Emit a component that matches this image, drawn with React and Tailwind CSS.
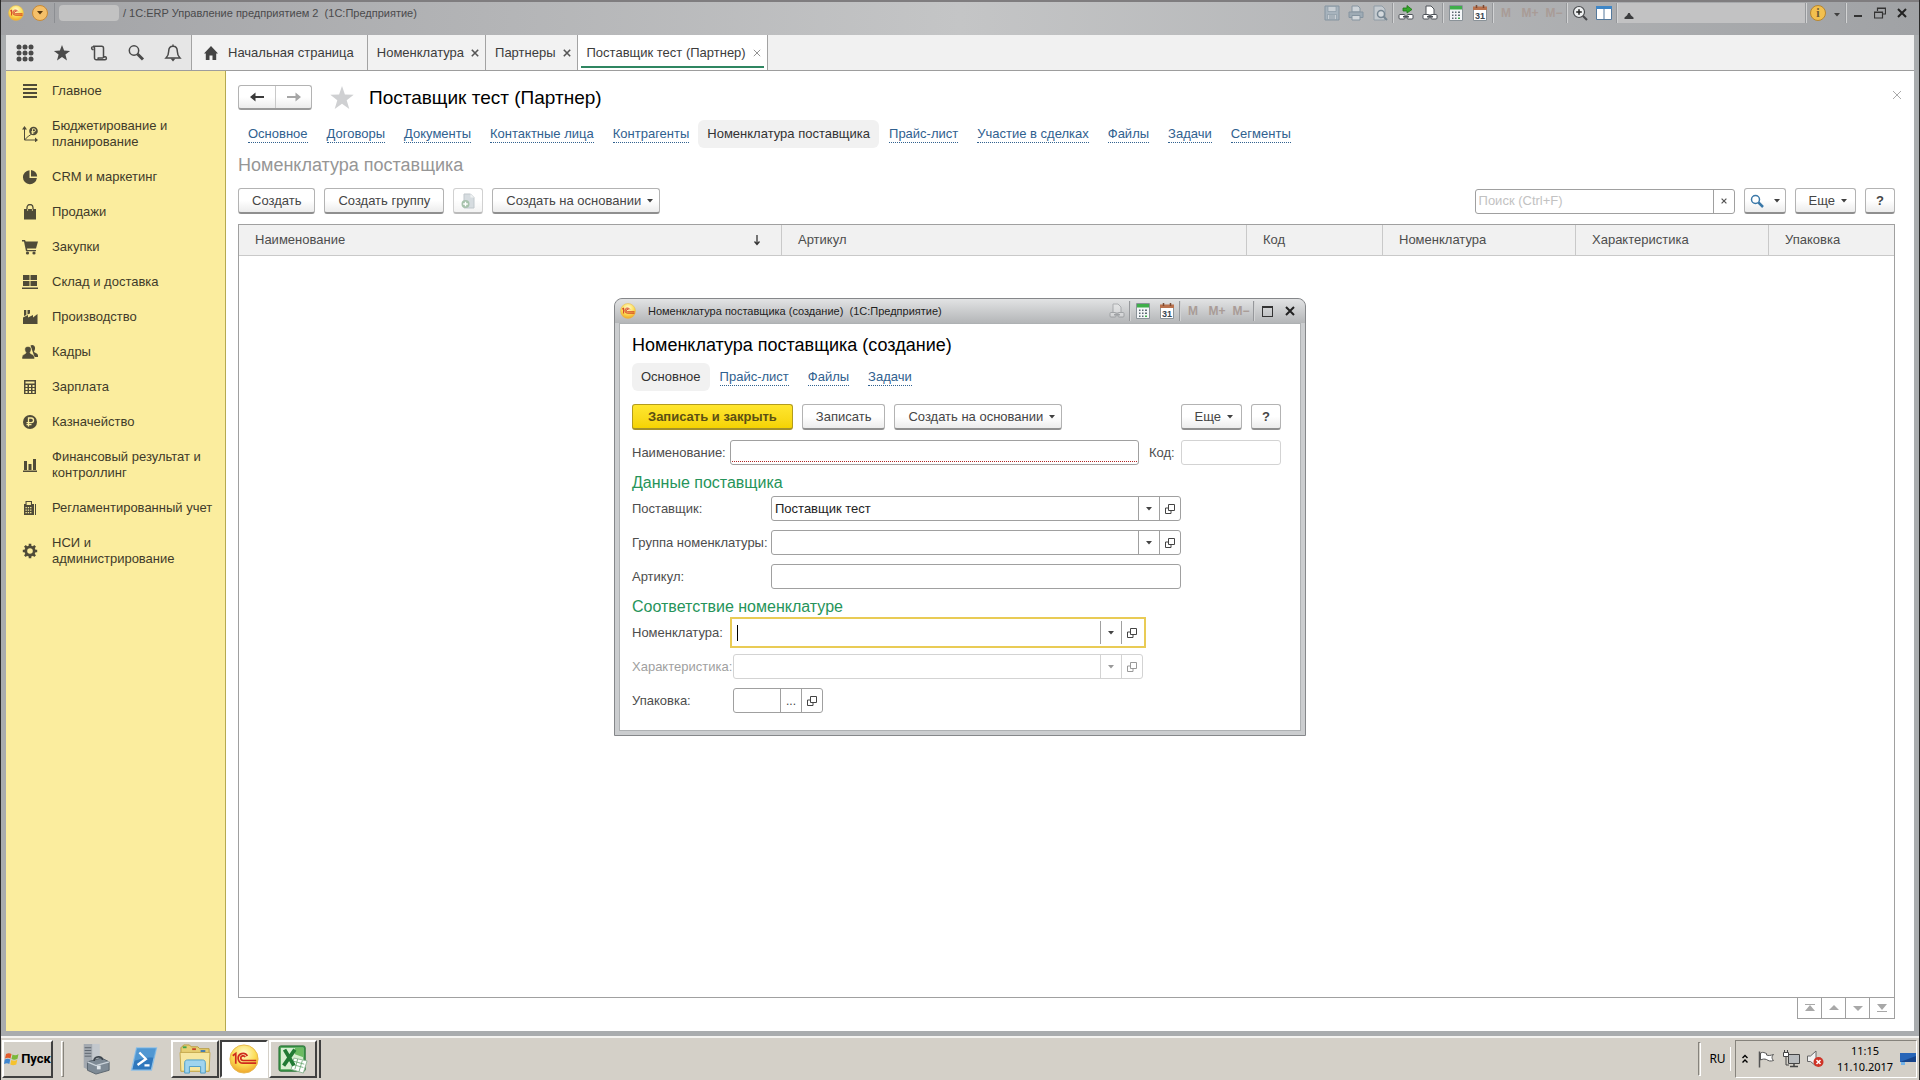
import { useState } from 'react';

const SECTIONS = [
  { icon: 'menu', label: 'Главное' },
  { icon: 'budget', label: 'Бюджетирование и планирование' },
  { icon: 'pie', label: 'CRM и маркетинг' },
  { icon: 'bag', label: 'Продажи' },
  { icon: 'cart', label: 'Закупки' },
  { icon: 'stock', label: 'Склад и доставка' },
  { icon: 'factory', label: 'Производство' },
  { icon: 'people', label: 'Кадры' },
  { icon: 'calc', label: 'Зарплата' },
  { icon: 'ruble', label: 'Казначейство' },
  { icon: 'bars', label: 'Финансовый результат и контроллинг' },
  { icon: 'ledger', label: 'Регламентированный учет' },
  { icon: 'gear', label: 'НСИ и администрирование' },
];

const PARTNER_LINKS = [
  'Основное',
  'Договоры',
  'Документы',
  'Контактные лица',
  'Контрагенты',
  'Номенклатура поставщика',
  'Прайс-лист',
  'Участие в сделках',
  'Файлы',
  'Задачи',
  'Сегменты',
];

const DIALOG_LINKS = ['Основное', 'Прайс-лист', 'Файлы', 'Задачи'];

// Section icons, all drawn on a 16x16 grid
const SECTION_SHAPES = {
  menu: <path d="M1 1h14v2H1zM1 5h14v2H1zM1 9h14v2H1zM1 13h14v2H1z" />,
  budget: (
    <>
      <path d="M2.5 3v11H14M2.5 14l4-4 2-1 2-2" fill="none" stroke="currentColor" />
      <path d="M2.5 0L5 3.5H0zM16 14l-3-2.5v5z" />
      <circle cx="11.5" cy="5" r="4.3" />
      <path d="M10.5 8V2.8h1.6a1.4 1.4 0 0 1 0 2.8H9.3M9.3 6.9h3" fill="none" stroke="#fbed9e" strokeWidth="0.9" />
    </>
  ),
  pie: (
    <>
      <path d="M7.5 1.2A7 7 0 1 0 14.9 9H7.5z" />
      <path d="M9 .9V7.4h6.2A6.9 6.9 0 0 0 9 .9z" />
    </>
  ),
  bag: (
    <>
      <path d="M2 5h12v10.5H2z" />
      <path d="M5 8V3.5a3 3 0 0 1 6 0V8" fill="none" stroke="currentColor" strokeWidth="1.3" />
      <path d="M5.6 5v2M10.4 5v2" stroke="#fbed9e" strokeWidth="0.7" />
    </>
  ),
  cart: (
    <>
      <path d="M0 1h3l.7 1.5H16L14 9.5H5l.3 1.5H14v1.3H4L2 2.4H0z" />
      <circle cx="5.5" cy="14" r="1.6" />
      <circle cx="12" cy="14" r="1.6" />
    </>
  ),
  stock: <path d="M1 1h6.5v5H1zM8.5 1H15v5H8.5zM1 7h6.5v5H1zM8.5 7H15v5H8.5zM0 13.500h16V15H0z" />,
  factory: <path d="M1 15V8.5L6 6v2.500L11 6v2.500L15.500 5v10zM2 1h2.300v5L2 7zM5.500 1H8v3.500L5.500 5.500z" />,
  people: (
    <>
      <path d="M8.5 1.500a3 3 0 0 1 4.500 2c.2 1.500-.2 3-1 4 .3 1.500 4 1.500 4 4v1.500h-3.500z" />
      <path d="M6 2.500c4 0 3.600 4 2 6 .3 2 4.500 1.700 4.500 5V15H0v-1.500c0-3.300 3.700-3 4-5-1.600-2-2-6 2-6z" stroke="#fbed9e" strokeWidth="0.5" />
    </>
  ),
  calc: (
    <>
      <path d="M2 1h12v14H2z" />
      <path d="M3.500 2.500h9v2h-9zM3.500 6h2v2h-2zM7 6h2v2H7zM10.500 6h2v2h-2zM3.500 9h2v2h-2zM7 9h2v2H7zM10.500 9h2v2h-2zM3.500 12h2v2h-2zM7 12h2v2H7zM10.500 12h2v2h-2z" fill="#fbed9e" />
    </>
  ),
  ruble: (
    <>
      <circle cx="8" cy="8" r="7" />
      <path d="M6.500 12.500v-8.500h2.700a2.300 2.300 0 0 1 0 4.700H4.500M4.500 10.600h5" fill="none" stroke="#fbed9e" strokeWidth="1.3" />
    </>
  ),
  bars: <path d="M2 4h3v9H2zM6.500 7h3v6h-3zM11 2h3v11h-3zM1 13.500h14V15H1z" />,
  ledger: (
    <>
      <path d="M2 4h1.500V1H10v3h2v11H2zM13 4h1v11h-1z" />
      <path d="M4.600 2.100h4.300v3H4.600zM3.500 7h1.300v1.300H3.500zM5.800 7h1.300v1.300H5.800zM8.100 7h1.300v1.300H8.100zM3.500 9.500h1.300v1.300H3.500zM5.800 9.500h1.300v1.300H5.800zM8.100 9.500h1.300v1.300H8.100zM3.500 12h1.300v1.300H3.500zM5.800 12h1.300v1.300H5.800zM8.100 12h1.300v1.300H8.100z" fill="#fbed9e" />
    </>
  ),
  gear: (
    <>
      <circle cx="8" cy="8" r="4.2" fill="none" stroke="currentColor" strokeWidth="2.8" />
      <path d="M8 .8v2.500M8 12.700v2.500M.8 8h2.500M12.700 8h2.500M2.900 2.900l1.700 1.700M11.400 11.400l1.700 1.700M13.100 2.900l-1.700 1.700M4.600 11.400l-1.700 1.700" stroke="currentColor" strokeWidth="2.6" />
    </>
  ),
};

function SectionIcon({ name }) {
  return (
    <svg viewBox="0 0 16 16" className="size-4 shrink-0 text-[#4f4b38]" fill="currentColor" aria-hidden="true">
      {SECTION_SHAPES[name]}
    </svg>
  );
}

function Logo({ className }) {
  return (
    <svg viewBox="0 0 32 32" className={className} aria-hidden="true">
      <defs>
        <radialGradient id="logoFill" cx="50%" cy="30%" r="70%">
          <stop offset="0" stopColor="#fffbd0" />
          <stop offset="0.6" stopColor="#fbdc52" />
          <stop offset="1" stopColor="#f0a52c" />
        </radialGradient>
      </defs>
      <circle cx="16" cy="16" r="15" fill="url(#logoFill)" stroke="#e8b64a" />
      <path d="M4 12.500l3.200-2.500V21M19.600 12.800A5.200 5.200 0 1 0 15 20.400H29M17.300 14A2.500 2.500 0 1 0 15 17.600H29" fill="none" stroke="#cf2a1c" strokeWidth="1.8" />
    </svg>
  );
}

function Caret({ className = 'text-[#404040]' }) {
  return (
    <svg viewBox="0 0 6 4" className={`h-1 w-1.5 shrink-0 ${className}`} fill="currentColor" aria-hidden="true">
      <path d="M0 0h6L3 3.500z" />
    </svg>
  );
}

function Cross({ className }) {
  return (
    <svg viewBox="0 0 10 10" className={className} fill="none" stroke="currentColor" aria-hidden="true">
      <path d="M1 1l8 8M9 1L1 9" />
    </svg>
  );
}

function CalculatorIcon() {
  return (
    <svg viewBox="0 0 14 16" className="h-4 w-3.5" aria-hidden="true">
      <path d="M.5.5h13v15H.5z" fill="#f4f6f8" stroke="#8a9298" />
      <path d="M1 1h12v3.500H1z" fill="#3fae4a" />
      <path d="M3 6.500h1.500V8H3zM6 6.500h1.500V8H6zM9 6.500h2V8H9zM3 9.500h1.500V11H3zM6 9.500h1.500V11H6zM9 9.500h2V11H9zM3 12.500h1.500V14H3zM6 12.500h1.500V14H6z" fill="#5d6b74" />
      <path d="M9 12.500h2V14H9z" fill="#3fae4a" />
    </svg>
  );
}

function CalendarIcon() {
  return (
    <svg viewBox="0 0 14 16" className="h-4 w-3.5" aria-hidden="true">
      <path d="M.5 2.500h13v13H.5z" fill="#fff" stroke="#8a9298" />
      <path d="M0 1.500h14V5H0z" fill="#b9714d" />
      <path d="M3.500 0v3M10.500 0v3" stroke="#7a4a33" strokeWidth="1.5" />
      <text x="7" y="14" textAnchor="middle" fontSize="9" fontWeight="700" fill="#3a4650" fontFamily="Liberation Sans, sans-serif">31</text>
    </svg>
  );
}

function PrinterIcon() {
  return (
    <svg viewBox="0 0 16 16" className="size-4" aria-hidden="true">
      <path d="M4 1h6l2 2v4H4z" fill="#cdd3d8" stroke="#8594a0" />
      <path d="M1 7h14v5.500H1z" fill="#9eabb5" stroke="#8594a0" />
      <path d="M4 10.500h8V15H4z" fill="#d3d8dc" stroke="#8594a0" />
    </svg>
  );
}

// Sheet of paper over two chain links
function LinkedSheetIcon({ className = 'size-4' }) {
  return (
    <svg viewBox="0 0 16 16" className={className} aria-hidden="true">
      <path d="M4 1h5l3 3v6H4z" fill="#fff" stroke="#4c5157" />
      <rect x="1" y="9.500" width="6" height="4.500" rx="1" fill="#fff" stroke="#4c5157" />
      <rect x="9" y="9.500" width="6" height="4.500" rx="1" fill="#fff" stroke="#4c5157" />
      <path d="M5 11.700h6" stroke="#4c5157" strokeWidth="1.5" />
    </svg>
  );
}

function ToolButton({ label, children, className = 'w-6' }) {
  return (
    <button type="button" aria-label={label} className={`flex h-5 items-center justify-center ${className}`}>
      {children}
    </button>
  );
}

function ToolDivider() {
  return <span className="h-5 w-0.5 shrink-0 border-r border-l border-r-[#d2d3d4] border-l-[#96989b]" />;
}

function MemoryButtons() {
  return ['M', 'M+', 'M−'].map((text) => (
    <button key={text} type="button" className="h-5 w-6 text-xs font-bold text-[#a99c97]">
      {text}
    </button>
  ));
}

function TitleBar() {
  return (
    <header className="flex h-[35px] items-start border-t-2 border-[#7f7d7f] bg-linear-to-r from-[#a2a3a6] via-[#c4c5c6] to-[#a0a2a5] pr-1.5 pl-[7px]">
      <div className="flex h-[22px] grow items-center">
        <Logo className="size-4" />
        <button type="button" aria-label="Главное меню" className="mr-1.5 ml-2 flex size-4 items-center justify-center rounded-full border border-[#c98a35] bg-[#f5c069]">
          <Caret className="text-[#5b3a10]" />
        </button>
        <span className="h-5 w-px bg-[#8c8e92]" />
        <span className="mr-1 ml-1 h-4 w-[60px] rounded-sm bg-[#c2c2c2]" />
        <h1 className="text-[11px] whitespace-pre text-[#4a4a4c]">/ 1С:ERP Управление предприятием 2  (1С:Предприятие)</h1>
      </div>
      <div className="flex h-[22px] items-center">
        <ToolButton label="Сохранить">
          <svg viewBox="0 0 16 16" className="size-4" aria-hidden="true">
            <path d="M1 1h14v14H1z" fill="#a7b3bd" stroke="#8594a0" />
            <path d="M4 1.500h8v5H4zM3.500 9.500h9v5h-9z" fill="#c9cfd4" stroke="#8594a0" strokeWidth="0.6" />
            <path d="M5 11h6M5 13h6" stroke="#8594a0" />
          </svg>
        </ToolButton>
        <ToolButton label="Печать"><PrinterIcon /></ToolButton>
        <ToolButton label="Предварительный просмотр">
          <svg viewBox="0 0 16 16" className="size-4" aria-hidden="true">
            <path d="M2 1h8l3 3v11H2z" fill="#c5cbd0" stroke="#8f9ca6" />
            <circle cx="9" cy="9" r="3.5" fill="#d5dade" stroke="#768692" strokeWidth="1.5" />
            <path d="M11.500 11.500L15 15" stroke="#768692" strokeWidth="2" />
          </svg>
        </ToolButton>
        <ToolDivider />
        <ToolButton label="Получить ссылку">
          <svg viewBox="0 0 16 16" className="size-4" aria-hidden="true">
            <path d="M5 3h4V.5L14 4.500 9 8V6H5z" fill="#35a82b" stroke="#1d7617" strokeWidth="0.8" />
            <rect x="1" y="9.500" width="6" height="4.500" rx="1" fill="#fff" stroke="#4c5157" />
            <rect x="9" y="9.500" width="6" height="4.500" rx="1" fill="#fff" stroke="#4c5157" />
            <path d="M5 11.700h6" stroke="#4c5157" strokeWidth="1.5" />
          </svg>
        </ToolButton>
        <ToolButton label="Перейти по ссылке"><LinkedSheetIcon /></ToolButton>
        <ToolDivider />
        <ToolButton label="Калькулятор"><CalculatorIcon /></ToolButton>
        <ToolButton label="Календарь"><CalendarIcon /></ToolButton>
        <ToolDivider />
        <MemoryButtons />
        <ToolDivider />
        <ToolButton label="Масштаб">
          <svg viewBox="0 0 16 16" className="size-4" fill="none" aria-hidden="true">
            <circle cx="7" cy="7" r="5.5" fill="#eef0f1" stroke="#47494c" strokeWidth="1.2" />
            <path d="M7 4.200v5.600M4.200 7h5.600" stroke="#222" strokeWidth="1.5" />
            <path d="M11 11l4 4" stroke="#47494c" strokeWidth="2.2" />
          </svg>
        </ToolButton>
        <ToolButton label="Панели">
          <svg viewBox="0 0 16 16" className="size-4" aria-hidden="true">
            <path d="M.5 1.500h15v13H.5z" fill="#fff" stroke="#54799c" />
            <path d="M0 1h16v3H0z" fill="#3f86c6" />
            <path d="M8 4v10.500" stroke="#54799c" />
          </svg>
        </ToolButton>
        <ToolDivider />
        <span className="flex h-5 w-[187px] items-end bg-[#c2c2c3]">
          <svg viewBox="0 0 12 8" className="mb-1 ml-1.5 h-1.5 w-2.5" fill="#3c3d3f" aria-hidden="true">
            <path d="M3.500 3L5 0h2l1.500 3L12 6v2H0V6z" />
          </svg>
        </span>
        <ToolDivider />
        <ToolButton label="Информация" className="w-[22px]">
          <span className="flex size-4 items-center justify-center rounded-full border border-[#b8862e] bg-[#f2c04f] font-['Liberation_Serif',serif] text-xs font-bold text-[#6b5a36]">i</span>
        </ToolButton>
        <ToolButton label="Ещё" className="w-4 pt-1"><Caret /></ToolButton>
        <ToolDivider />
        <ToolButton label="Свернуть" className="w-[22px]"><span className="mt-1.5 h-0.5 w-2 bg-[#333]" /></ToolButton>
        <ToolButton label="Восстановить" className="w-[22px]">
          <svg viewBox="0 0 12 12" className="size-3" fill="none" stroke="#333" aria-hidden="true">
            <path d="M3.500 4V1h8v6H9M3.500 1.500h8" strokeWidth="1.2" />
            <path d="M.5 5h8v6h-8zM.5 5.500h8" strokeWidth="1.2" />
          </svg>
        </ToolButton>
        <ToolButton label="Закрыть" className="w-[22px]"><Cross className="size-2.5 stroke-2 text-[#222]" /></ToolButton>
      </div>
    </header>
  );
}

function Tab({ label, active }) {
  return (
    <div className={`flex h-full items-center border-r border-[#a3a3a3] pr-[5px] pl-[9px] ${active ? 'relative -mb-px bg-white' : 'bg-[#f2f2f2]'}`}>
      <button type="button" className="text-[13px] whitespace-nowrap text-[#3c3c3c]">{label}</button>
      <button type="button" aria-label={`Закрыть: ${label}`} className="ml-1.5 flex size-2.5 items-center justify-center">
        <Cross className={active ? 'size-2 text-[#777]' : 'size-2 stroke-2 text-[#555]'} />
      </button>
      {active && <span className="absolute inset-x-[3px] bottom-0.5 h-0.5 bg-[#2f8661]" />}
    </div>
  );
}

function TopPanel() {
  return (
    <nav className="flex h-9 border-b border-[#9d9d9d] bg-[#f1f1f1]">
      <div className="flex w-[185px] shrink-0 items-center bg-[#e6e6e6] text-[#4a4a4a]">
        <ToolButton label="Меню функций" className="w-[37px]">
          <svg viewBox="0 0 18 18" className="size-[18px]" fill="currentColor" aria-hidden="true">
            {[3, 9, 15].map((y) => [3, 9, 15].map((x) => <circle key={`${x}-${y}`} cx={x} cy={y} r="2.5" />))}
          </svg>
        </ToolButton>
        <ToolButton label="Избранное" className="w-[37px]">
          <svg viewBox="0 0 18 18" className="size-[18px]" fill="currentColor" aria-hidden="true">
            <path d="M9 1l2.100 5.600 6 .3-4.700 3.700 1.600 5.800L9 13.100l-5 3.300 1.600-5.800L.9 6.900l6-.3z" />
          </svg>
        </ToolButton>
        <ToolButton label="История" className="w-[37px]">
          <svg viewBox="0 0 18 18" className="size-[18px]" fill="none" stroke="currentColor" strokeWidth="1.5" aria-hidden="true">
            <path d="M3.500 5.500h-1A1.500 1.500 0 1 1 4.500 3.500V14a1.800 1.800 0 0 0 1.800 1.800H15a1.500 1.500 0 1 0-1.500-2V4a1.800 1.800 0 0 0-1.800-1.800H3M6.500 15.800A1.800 1.800 0 0 0 8.300 14h5" />
          </svg>
        </ToolButton>
        <ToolButton label="Поиск" className="w-[37px]">
          <svg viewBox="0 0 18 18" className="size-[18px]" fill="none" stroke="currentColor" aria-hidden="true">
            <circle cx="7" cy="6.500" r="4.700" strokeWidth="1.5" />
            <path d="M10.500 10L16 15.500" strokeWidth="3" />
          </svg>
        </ToolButton>
        <ToolButton label="Оповещения" className="w-[37px]">
          <svg viewBox="0 0 18 18" className="size-[18px]" fill="none" stroke="currentColor" strokeWidth="1.5" aria-hidden="true">
            <path d="M9 2.200c-3 0-4.300 2.200-4.300 5 0 3.600-1 5-2.700 6.800h14c-1.700-1.800-2.700-3.200-2.700-6.800 0-2.800-1.300-5-4.300-5zM9 .5v2" />
            <path d="M6.500 14.500h5L9 17.500z" fill="currentColor" strokeWidth="0" />
          </svg>
        </ToolButton>
      </div>
      <button type="button" className="flex items-center gap-2.5 border-x border-[#a3a3a3] bg-[#f2f2f2] pr-[13px] pl-3 text-[13px] whitespace-nowrap text-[#3c3c3c]">
        <svg viewBox="0 0 14 14" className="size-3.5" fill="#444" aria-hidden="true">
          <path d="M7 0l7 7.500h-1.800V14H8.500V9.500h-3V14H1.800V7.500H0z" />
        </svg>
        Начальная страница
      </button>
      <Tab label="Номенклатура" />
      <Tab label="Партнеры" />
      <Tab label="Поставщик тест (Партнер)" active />
    </nav>
  );
}

function Sidebar() {
  return (
    <aside className="w-[220px] shrink-0 border-r border-[#b5a951] bg-[#fbed9e] pt-[3px]">
      <ul>
        {SECTIONS.map(({ icon, label }) => (
          <li key={label}>
            <button type="button" className="flex w-full items-center gap-3.5 pt-[9px] pr-2 pb-2.5 pl-4 text-left text-[13px] leading-4 text-[#3f3b2a]">
              <SectionIcon name={icon} />
              {label}
            </button>
          </li>
        ))}
      </ul>
    </aside>
  );
}

function LinkBar({ links, active }) {
  return (
    <nav className="flex h-7 items-center text-[13px]">
      {links.map((link) =>
        link === active ? (
          <span key={link} className="rounded-md bg-[#f1f1f1] px-[9px] py-1 leading-5 whitespace-nowrap text-[#333]">{link}</span>
        ) : (
          <a key={link} href="#" className="mr-[9px] ml-2.5 border-b border-dotted border-[#30618f] leading-4 whitespace-nowrap text-[#30618f]">{link}</a>
        ),
      )}
    </nav>
  );
}

function Button({ children, caret, primary, label, className = 'px-[13px]' }) {
  const tone = primary
    ? 'border-[#b39c1d] border-b-[#a3902c] bg-linear-to-b from-[#ffe62e] to-[#f5d300] font-bold text-[#5c5013]'
    : 'border-[#b3b3b3] border-b-[#8f8f8f] bg-linear-to-b from-white from-50% to-[#ececec] text-[#454545]';
  return (
    <button type="button" aria-label={label} className={`flex h-[26px] shrink-0 items-center justify-center gap-1.5 rounded-[3px] border border-b-2 pt-px text-[13px] whitespace-nowrap ${tone} ${className}`}>
      {children}
      {caret && <Caret />}
    </button>
  );
}

function OpenIcon() {
  return (
    <svg viewBox="0 0 10 10" className="size-2.5" fill="none" stroke="currentColor" aria-hidden="true">
      <path d="M3.500.5h6v6h-6zM3.500 4H.5v5.500H6V6.500" />
    </svg>
  );
}

// Text box with the small buttons that 1C puts at its right edge
function Field({ id, width, value, picker, disabled, focused }) {
  const line = disabled ? 'border-[#d3d3d3]' : 'border-[#a0a0a0]';
  const color = disabled ? 'text-[#999]' : 'text-[#444]';
  const box = focused ? 'h-[31px] border-2 border-[#e9cb55] p-0.5' : `h-[25px] rounded-[3px] border ${line}`;
  return (
    <div className={`flex bg-white ${box} ${width}`}>
      {focused && <span className="mt-1 ml-[3px] h-4 w-px bg-black" />}
      <input id={id} defaultValue={value} disabled={disabled} className="min-w-0 grow px-[3px] text-[13px] text-[#222] outline-none" />
      {picker && (
        <>
          <button type="button" aria-label="Выбрать" disabled={disabled} className={`flex w-[21px] shrink-0 items-center justify-center border-l text-xs ${line} ${color}`}>
            {picker === 'list' ? <Caret className={color} /> : '...'}
          </button>
          <button type="button" aria-label="Открыть" disabled={disabled} className={`flex w-[21px] shrink-0 items-center justify-center border-l ${line} ${color}`}>
            <OpenIcon />
          </button>
        </>
      )}
    </div>
  );
}

function Row({ id, label, labelWidth, disabled, children }) {
  return (
    <div className="flex items-center text-[13px]">
      <label htmlFor={id} className={`shrink-0 whitespace-nowrap ${labelWidth} ${disabled ? 'text-[#a0a0a0]' : 'text-[#4d4d4d]'}`}>{label}</label>
      {children}
    </div>
  );
}

function SupplierItemDialog({ onClose }) {
  return (
    <section role="dialog" aria-label="Номенклатура поставщика (создание)" className="absolute top-[298px] left-1/2 w-[692px] -translate-x-1/2 rounded-t-lg border border-[#85878a] bg-[#cbcdcf] px-1 pb-1">
      <div className="-mx-1 flex h-6 items-center rounded-t-lg bg-linear-to-b from-[#e2e3e4] to-[#b4b6b8] pr-1 pl-[5px]">
        <Logo className="size-4" />
        <h2 className="grow pl-3 text-[11px] whitespace-pre text-[#222]">Номенклатура поставщика (создание)  (1С:Предприятие)</h2>
        <ToolButton label="Перейти по ссылке"><LinkedSheetIcon className="size-4 opacity-30" /></ToolButton>
        <ToolDivider />
        <ToolButton label="Калькулятор"><CalculatorIcon /></ToolButton>
        <ToolButton label="Календарь"><CalendarIcon /></ToolButton>
        <ToolDivider />
        <MemoryButtons />
        <ToolDivider />
        <ToolButton label="Развернуть"><span className="size-[11px] border border-t-2 border-[#333]" /></ToolButton>
        <button type="button" aria-label="Закрыть" onClick={onClose} className="flex h-5 w-[22px] items-center justify-center">
          <Cross className="size-2.5 stroke-2 text-[#222]" />
        </button>
      </div>
      <form className="border border-[#aeb1b3] bg-white pt-[9px] pr-[19px] pb-[17px] pl-3" onSubmit={(e) => e.preventDefault()}>
        <h3 className="text-lg leading-6 text-black">Номенклатура поставщика (создание)</h3>
        <div className="mt-1.5">
          <LinkBar links={DIALOG_LINKS} active="Основное" />
        </div>
        <div className="mt-[13px] flex gap-[9px]">
          <Button primary className="px-[15px]">Записать и закрыть</Button>
          <Button>Записать</Button>
          <Button caret className="pr-1.5 pl-[13px]">Создать на основании</Button>
          <div className="grow" />
          <Button caret className="pr-2 pl-[13px]">Еще</Button>
          <Button label="Справка" className="w-[30px] font-bold">?</Button>
        </div>
        <div className="mt-2.5 flex items-center text-[13px] text-[#4d4d4d]">
          <label htmlFor="name" className="w-[98px] shrink-0">Наименование:</label>
          <div className="h-[25px] grow rounded-[3px] border border-[#a0a0a0] px-px pb-0.5">
            <input id="name" className="block h-full w-full border-b border-dotted border-[#b02525] px-0.5 outline-none" />
          </div>
          <label htmlFor="code" className="w-[42px] shrink-0 pl-2.5">Код:</label>
          <Field id="code" width="w-[100px]" disabled />
        </div>

        <h4 className="mt-2 mb-[3px] text-base leading-5 text-[#26945a]">Данные поставщика</h4>
        <div className="flex flex-col gap-[9px]">
          <Row id="supplier" label="Поставщик:" labelWidth="w-[139px]">
            <Field id="supplier" width="w-[410px]" value="Поставщик тест" picker="list" />
          </Row>
          <Row id="group" label="Группа номенклатуры:" labelWidth="w-[139px]">
            <Field id="group" width="w-[410px]" picker="list" />
          </Row>
          <Row id="article" label="Артикул:" labelWidth="w-[139px]">
            <Field id="article" width="w-[410px]" />
          </Row>
        </div>

        <h4 className="mt-2 text-base leading-5 text-[#26945a]">Соответствие номенклатуре</h4>
        <Row id="item" label="Номенклатура:" labelWidth="w-[98px]">
          <Field id="item" width="w-[416px]" picker="list" focused />
        </Row>
        <div className="mt-1.5 flex flex-col gap-[9px]">
          <Row id="feature" label="Характеристика:" labelWidth="w-[101px]" disabled>
            <Field id="feature" width="w-[410px]" picker="list" disabled />
          </Row>
          <Row id="pack" label="Упаковка:" labelWidth="w-[101px]">
            <Field id="pack" width="w-[90px]" picker="dots" />
          </Row>
        </div>
      </form>
    </section>
  );
}

const HEAD_CELL = 'border-r border-b border-[#c9c9c9] px-4 text-left font-normal last:border-r-0';

function SupplierItems() {
  return (
    <main className="flex min-w-0 grow flex-col bg-white pr-[19px] pb-3 pl-3">
      <div className="flex h-[49px] items-center pt-1">
        <div className="flex h-[25px] rounded-[3px] border border-b-2 border-[#b3b3b3] border-b-[#9a9a9a] bg-linear-to-b from-white from-50% to-[#ececec]">
          {['Назад', 'Вперед'].map((label, i) => (
            <button key={label} type="button" aria-label={label} className={i ? 'flex w-9 items-center justify-center border-l border-[#c9c9c9] text-[#a6a6a6]' : 'flex w-9 items-center justify-center text-[#3a3a3a]'}>
              <svg viewBox="0 0 14 10" className={i ? 'h-2.5 w-3.5 rotate-180' : 'h-2.5 w-3.5'} fill="currentColor" aria-hidden="true">
                <path d="M0 5l5.500-4.500V4H14v2H5.500v3.500z" />
              </svg>
            </button>
          ))}
        </div>
        <button type="button" aria-label="В избранное" className="ml-[18px]">
          <svg viewBox="0 0 24 24" className="size-6" fill="#cfd0d2" aria-hidden="true">
            <path d="M12 0l2.900 8.600 8.800.2-7 5.500 2.600 8.700L12 17.800 4.700 23l2.600-8.700-7-5.500 8.800-.2z" />
          </svg>
        </button>
        <h2 className="grow pl-[15px] text-[19px] leading-6 text-black">Поставщик тест (Партнер)</h2>
        <button type="button" aria-label="Закрыть" className="mb-1.5 -mr-2 p-px">
          <Cross className="size-2.5 text-[#aaa]" />
        </button>
      </div>
      <LinkBar links={PARTNER_LINKS} active="Номенклатура поставщика" />
      <h3 className="mt-[5px] text-lg leading-6 text-[#969696]">Номенклатура поставщика</h3>

      <div className="mt-[11px] flex items-center gap-[9px]">
        <Button>Создать</Button>
        <Button>Создать группу</Button>
        <Button label="Создать копированием" className="w-[30px] opacity-60">
          <svg viewBox="0 0 14 16" className="h-4 w-3.5" aria-hidden="true">
            <path d="M3 1h6.500L13 4.500V15H3z" fill="#bcc6cc" stroke="#98a4ab" />
            <path d="M9.500 1v3.500H13z" fill="#e6eaec" />
            <circle cx="4.500" cy="11" r="4" fill="#6d9a75" />
            <path d="M4.500 8.700v4.600M2.200 11h4.600" stroke="#fff" strokeWidth="1.3" />
          </svg>
        </Button>
        <Button caret className="pr-1.5 pl-[13px]">Создать на основании</Button>
        <div className="grow" />
        <div className="flex h-[25px] w-[260px] rounded-[3px] border border-[#a0a0a0] bg-white">
          <input aria-label="Поиск" placeholder="Поиск (Ctrl+F)" className="min-w-0 grow px-[3px] text-[13px] outline-none placeholder:text-[#c2c2c2]" />
          <button type="button" aria-label="Очистить" className="flex w-[21px] items-center justify-center border-l border-[#a0a0a0]">
            <Cross className="size-1.5 stroke-2 text-[#555]" />
          </button>
        </div>
        <Button caret label="Найти" className="w-[42px] gap-2.5">
          <svg viewBox="0 0 14 14" className="size-3.5" fill="none" stroke="#3a78a8" aria-hidden="true">
            <circle cx="5.500" cy="5.500" r="4" strokeWidth="1.5" />
            <path d="M8.500 8.500L13 13" strokeWidth="2.5" />
          </svg>
        </Button>
        <Button caret className="pr-2 pl-[13px]">Еще</Button>
        <Button label="Справка" className="w-[30px] font-bold">?</Button>
      </div>

      <div className="mt-2.5 grow border border-[#a0a0a0]">
        <table className="w-full table-fixed border-separate border-spacing-0 text-[13px] text-[#4d4d4d]">
          <thead className="h-[31px] bg-[#f1f1f1]">
            <tr>
              <th className={HEAD_CELL}>
                <span className="flex items-center justify-between pr-1">
                  Наименование
                  <svg viewBox="0 0 8 12" className="h-3 w-2" fill="none" stroke="#333" strokeWidth="1.3" aria-hidden="true">
                    <path d="M4 1v9M1.500 7.500L4 10.500l2.500-3" />
                  </svg>
                </span>
              </th>
              <th className={`w-[465px] ${HEAD_CELL}`}>Артикул</th>
              <th className={`w-[136px] ${HEAD_CELL}`}>Код</th>
              <th className={`w-[193px] ${HEAD_CELL}`}>Номенклатура</th>
              <th className={`w-[193px] ${HEAD_CELL}`}>Характеристика</th>
              <th className={`w-[125px] ${HEAD_CELL}`}>Упаковка</th>
            </tr>
          </thead>
          <tbody />
        </table>
      </div>
      <div className="-mt-px flex justify-end">
        <div className="flex h-[22px] divide-x divide-[#a0a0a0] border border-[#a0a0a0]">
          {[
            ['В начало', 'M0 0h10v1H0zM5 1l5 6H0z'],
            ['Вверх', 'M5 1l5 5H0z'],
            ['Вниз', 'M0 2h10L5 7z'],
            ['В конец', 'M0 0h10L5 6zM0 7h10v1H0z'],
          ].map(([label, d]) => (
            <button key={label} type="button" aria-label={label} className="flex w-6 items-center justify-center">
              <svg viewBox="0 0 10 8" className="h-2 w-2.5" fill="#a8a8a8" aria-hidden="true"><path d={d} /></svg>
            </button>
          ))}
        </div>
      </div>
    </main>
  );
}

function TaskButton({ label, pressed, stacked, children }) {
  return (
    <button
      type="button"
      aria-label={label}
      className={
        pressed
          ? 'flex h-[38px] w-12 items-center justify-center border-2 border-t-[#404040] border-r-white border-b-white border-l-[#404040] bg-white'
          : `flex h-[38px] w-12 items-center justify-center border-2 border-t-white border-r-[#404040] border-b-[#404040] border-l-white ${stacked ? 'shadow-[2px_0_0_#d4d0c8,4px_0_0_#404040]' : ''}`
      }
    >
      {children}
    </button>
  );
}

function Taskbar() {
  return (
    <footer className="flex h-11 shrink-0 items-center border-t-2 border-[#f4f3f0] bg-[#d4d0c8] pr-0.5 pl-px">
      <button type="button" className="flex h-[38px] w-[51px] items-center justify-center gap-px border-2 border-t-white border-r-[#404040] border-b-[#404040] border-l-white font-[Roboto,sans-serif] text-[13px] font-bold text-black">
        <svg viewBox="0 0 16 16" className="size-4 shrink-0" aria-hidden="true">
          <path d="M2 3c2-1.200 4-1 5.500 0L6.500 7.500C5 6.500 3 6.500 1 7.500z" fill="#e25a2c" />
          <path d="M8.500 3.500c1.800 1 4 1 6-.5l-1 4.800c-2 1-4 1.200-6 .2z" fill="#7bb83a" />
          <path d="M.8 8.500c2-1 4-1 5.500 0l-1 4.500C4 12 2 12 0 13z" fill="#3f86d0" />
          <path d="M7.300 9c1.800 1 4 1 6-.2l-1 4.700c-2 1-4 1.200-6 .1z" fill="#f5c22e" />
        </svg>
        Пуск
      </button>
      <span className="mr-[15px] ml-2 h-9 w-[3px] border border-t-white border-r-[#86837c] border-b-[#86837c] border-l-white" />
      <button type="button" aria-label="Диспетчер серверов" className="flex size-8 items-center justify-center">
        <svg viewBox="0 0 32 34" className="size-8" aria-hidden="true">
          <path d="M4 1h13v26l-3 4-10-5z" fill="#a3a9b0" />
          <path d="M13 1h8v24h-8z" fill="#c3c8cd" />
          <path d="M5 5h7M5 8h7M5 11h7M5 14h7" stroke="#5c646d" />
          <path d="M8 20l15-4 8 4v9l-14 4-9-4z" fill="#7e8a95" stroke="#59636d" />
          <path d="M8 20l9 4 14-4" fill="none" stroke="#cbd3da" strokeWidth="1.5" />
          <path d="M15 19c0-5 9-6 9-1" fill="none" stroke="#3e464e" strokeWidth="1.8" />
          <path d="M18 24h4v4h-4z" fill="#dfe5ea" />
        </svg>
      </button>
      <button type="button" aria-label="PowerShell" className="ml-[17px] flex size-8 items-center justify-center">
        <svg viewBox="0 0 30 26" className="h-6 w-7" aria-hidden="true">
          <path d="M7 1h21.500L23 25H1.500z" fill="#2f78bd" stroke="#8fc0e6" strokeWidth="1.5" />
          <path d="M7 1h21.500L26 12C18 10 10 14 4 15z" fill="#5ea4dc" opacity="0.7" />
          <path d="M10 6l7 7-9 6.500M15.500 20H21" fill="none" stroke="#fff" strokeWidth="2.5" />
        </svg>
      </button>
      <div className="ml-[11px] flex gap-px">
        <TaskButton label="Проводник">
          <svg viewBox="0 0 34 32" className="h-[30px] w-8" aria-hidden="true">
            <path d="M2 4l3-3h6l2 2h7l2 2h10v24H2z" fill="#e6cf73" stroke="#b79a3c" />
            <path d="M4 2.500h4v2H4z" fill="#3fa34a" />
            <path d="M14 4.500h4v2h-4z" fill="#c8442c" />
            <path d="M23 6.500h5v2h-5z" fill="#3979b8" />
            <path d="M1 9h32l-1 20H2z" fill="#f7e7a0" stroke="#c4a94e" />
            <path d="M6 31V20c0-2 1-3 3-3h16c2 0 3 1 3 3v11h-5v-7H11v7z" fill="#9fd4ee" stroke="#4a9cc7" />
          </svg>
        </TaskButton>
        <TaskButton label="1С:Предприятие" pressed><Logo className="size-[30px]" /></TaskButton>
        <TaskButton label="Excel" stacked>
          <svg viewBox="0 0 32 32" className="size-[30px]" aria-hidden="true">
            <rect x="1" y="2" width="28" height="27" rx="2" fill="#3d9a4a" stroke="#1f6b2e" />
            <rect x="3" y="4" width="24" height="23" fill="#d8efd2" />
            <path d="M18 4h9v10l-9-3z" fill="#6cbb62" />
            <path d="M17 15l14 3-4 13-13-4z" fill="#fff" stroke="#8fb695" />
            <path d="M17 18.500l11 3M16 22l11 3M21 16l-3 11M26 17.500L22.500 29" stroke="#6aa872" strokeWidth="0.9" />
            <path d="M7 6l10 17M18 6L6 23" stroke="#217a35" strokeWidth="4" />
          </svg>
        </TaskButton>
      </div>
      <div className="grow" />
      <span className="h-[34px] w-[3px] border border-t-[#86837c] border-r-white border-b-white border-l-[#86837c]" />
      <button type="button" className="mx-1 h-6 w-[26px] border-r border-white font-['Noto_Sans',sans-serif] text-xs text-black">RU</button>
      <div className="flex h-[38px] w-[182px] items-center border border-t-[#86837c] border-r-white border-b-white border-l-[#86837c] font-['Noto_Sans',sans-serif] text-[11px] leading-4 text-black">
        <button type="button" aria-label="Показать значки" className="flex w-[18px] justify-center">
          <svg viewBox="0 0 8 10" className="h-2.5 w-2" fill="none" stroke="#000" strokeWidth="1.4" aria-hidden="true">
            <path d="M1.500 4L4 1.500 6.500 4M1.500 8.500L4 6l2.500 2.500" />
          </svg>
        </button>
        <svg viewBox="0 0 18 18" className="ml-[3px] size-[18px]" fill="#fff" stroke="#555" aria-hidden="true">
          <path d="M2.500 1.500v16" strokeWidth="1.5" />
          <path d="M3.500 3c3-1.500 4 0 6 .5v1.500c2 .8 4 .5 7-.5-2 2-2 4 0 6-3 1-5 .5-7-1-2-.8-4-.5-6 .5z" />
        </svg>
        <svg viewBox="0 0 18 18" className="ml-[7px] size-[18px]" aria-hidden="true">
          <path d="M6.500 4.500h11v9h-11z" fill="#b9bcbe" stroke="#444" />
          <path d="M8 16.500h8M12 14v2" stroke="#444" strokeWidth="1.5" />
          <path d="M1.500 2.500h5v4h-5z" fill="#fff" stroke="#444" />
          <path d="M2.500 0v2.500M5.500 0v2.500M4 7v8h3" fill="none" stroke="#444" />
        </svg>
        <svg viewBox="0 0 18 18" className="ml-1.5 size-[18px]" aria-hidden="true">
          <path d="M1.500 6h3L10 1v15l-5.500-4.500h-3z" fill="#f2f2f2" stroke="#666" />
          <circle cx="12.500" cy="12" r="5" fill="#cf3326" />
          <path d="M10.500 10l4 4M14.500 10l-4 4" stroke="#fff" strokeWidth="1.5" />
        </svg>
        <time className="grow pl-1.5 text-center">
          11:15
          <br />
          11.10.2017
        </time>
        <svg viewBox="0 0 16 14" className="h-3.5 w-4" aria-hidden="true">
          <path d="M0 1h16v9H0z" fill="#2765b8" />
          <path d="M0 10L16 4v6z" fill="#17448a" />
          <path d="M1 10h4v3H1z" fill="#74b3e8" />
        </svg>
      </div>
    </footer>
  );
}

export default function App() {
  const [dialogOpen, setDialogOpen] = useState(true);

  return (
    <div className="relative flex min-h-screen flex-col border-x border-[#2a2a2a] bg-[#a9acae] font-['Liberation_Sans',Arial,sans-serif]">
      <TitleBar />
      <div className="flex grow flex-col px-[5px] pb-[5px]">
        <TopPanel />
        <div className="flex grow">
          <Sidebar />
          <SupplierItems />
        </div>
      </div>
      <Taskbar />
      {dialogOpen && <SupplierItemDialog onClose={() => setDialogOpen(false)} />}
    </div>
  );
}
